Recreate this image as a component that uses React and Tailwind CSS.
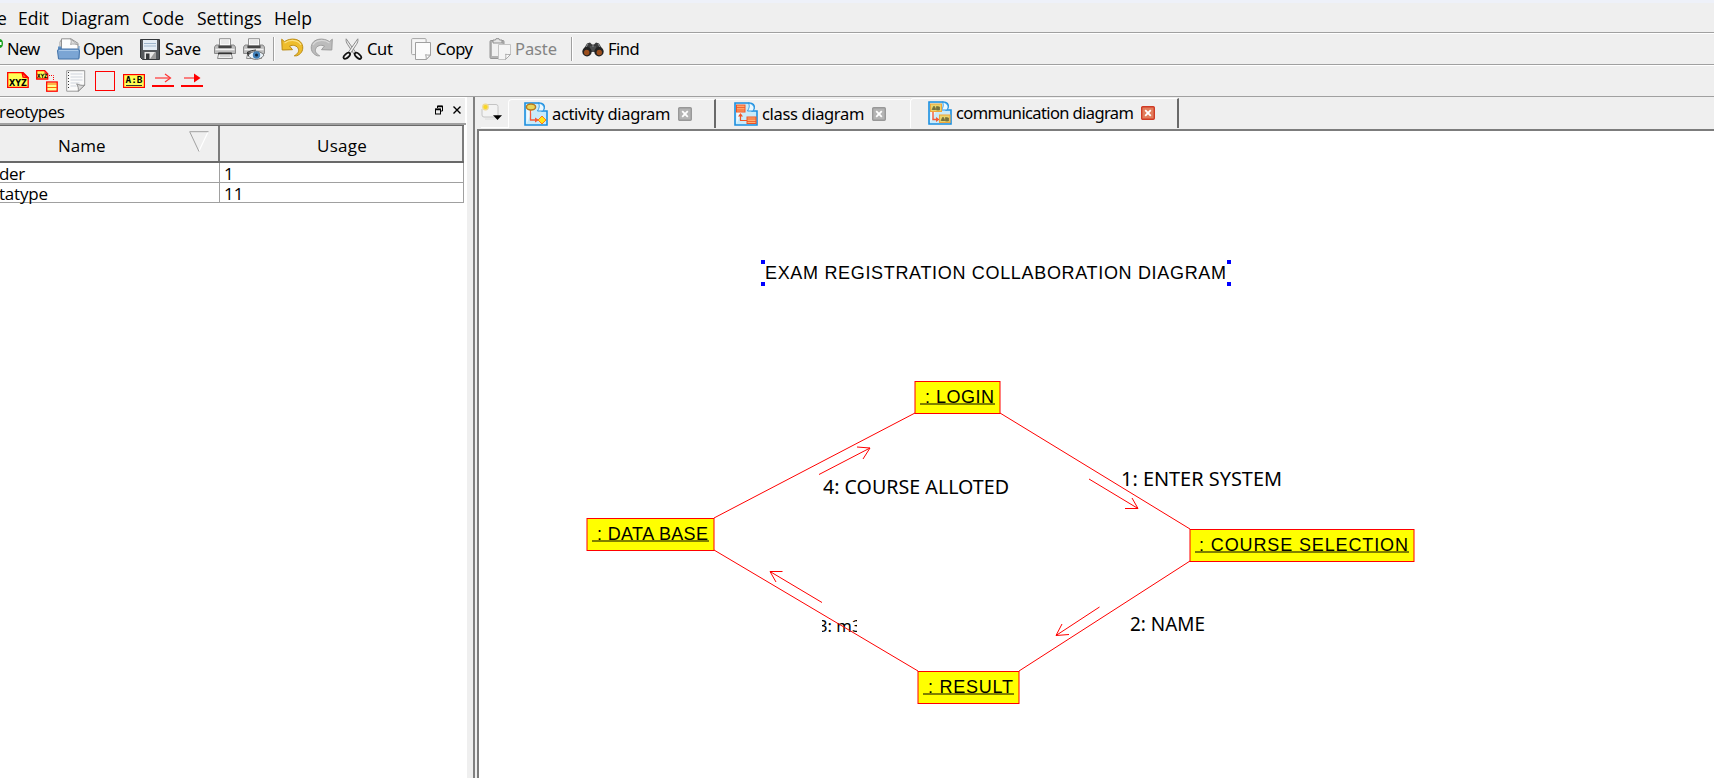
import React from "react";

const UI = "font-['Open_Sans','Noto_Sans',sans-serif]";
const TAHOMA = "font-['Noto_Sans','Open_Sans',sans-serif]";

/* ---------- toolbar icons ---------- */
function OpenIcon() {
  return (
    <svg width="23" height="22" viewBox="0 0 23 22" className="shrink-0">
      <path d="M4.500 12V1.500L3 4v6" fill="#fff" stroke="#9a9a9a" />
      <path d="M4.500 12V.8H14l7 4.500V12z" fill="#fdfdfd" stroke="#909090" />
      <path d="M13.500.8c1 2 .8 3.700 0 5.700 2.500-.8 5-.5 7.500.5z" fill="#dcdcdc" stroke="#9a9a9a" strokeWidth=".8" />
      <path d="M1 8.500h3.500v3H21.500V8h1v12H1z" fill="#5d8fc4" />
      <path d="M.5 13c0-1.500 1-2 2-2h18c1.300 0 2 .7 2 2l-.7 8H1.500z" fill="#7ba5d4" stroke="#4473a8" />
      <path d="M2 12.500h19" stroke="#a9c8e8" />
    </svg>
  );
}
function SaveIcon() {
  return (
    <svg width="20" height="21" viewBox="0 0 20 21" className="shrink-0">
      <path d="M.5.5h19v20h-17l-2-2z" fill="#54585c" stroke="#34373a" />
      <rect x="3" y="1" width="14" height="10" fill="#e4edf5" />
      <path d="M4 4.500h12M4 7h12" stroke="#9fb6cc" />
      <rect x="4.500" y="13" width="11" height="7" fill="#e8e8e8" />
      <rect x="6" y="14.500" width="3.500" height="5.500" fill="#34373a" />
      <path d="M10 20l5-7h.5v7z" fill="#9b9b9b" />
    </svg>
  );
}
function PrinterShape() {
  return (
    <>
      <path d="M5.500 8V.7h11V8z" fill="#f8f8f8" stroke="#909090" />
      <path d="M7 3h8M7 5h8" stroke="#d8d8d8" />
      <path d="M2 7h3v3h12V7h3l1.500 2v6.500H.5V9z" fill="#bcbcbc" stroke="#8a8a8a" />
      <rect x="4.500" y="7.500" width="13" height="2.500" fill="#444" />
      <path d="M1.500 11.500h19" stroke="#f2f2f2" strokeWidth="1.500" />
      <path d="M5 14.500h12l1.500 6h-15z" fill="#f0f0f0" stroke="#8c8c8c" />
      <path d="M4 15.500h14" stroke="#333" strokeWidth="1.600" />
      <path d="M6 18h10" stroke="#bbb" />
    </>
  );
}
function PrintIcon() {
  return (
    <svg width="22" height="22" viewBox="0 0 22 22" className="shrink-0">
      <PrinterShape />
    </svg>
  );
}
function PreviewIcon() {
  return (
    <svg width="22" height="22" viewBox="0 0 22 22" className="shrink-0">
      <PrinterShape />
      <path d="M5 17.500c4-5 11-6 16-.5-3 5.500-12 6-16 .5z" fill="#eaf2f8" stroke="#777" />
      <circle cx="13.500" cy="17" r="3.700" fill="#3f7fb8" />
      <circle cx="13.500" cy="17" r="1.500" fill="#12263c" />
      <path d="M4 14.500c3-1.500 5-2 9-2.500M4.500 14l1 4" stroke="#333" fill="none" />
    </svg>
  );
}
function TurnIcon({ redo }) {
  return (
    <svg width="23" height="19" viewBox="0 0 23 19" className={redo ? "shrink-0 -scale-x-100" : "shrink-0"}>
      <path
        d="M.7 1.200L3.500 3.700C9-.6 20.500 0 21.700 8.500c.5 4.500-2 8-6.200 9.300h-2.200c4-2.300 4.900-4.700 4-7C16.200 7.600 12 6.500 8.500 8l3 3.700-10.300.3z"
        fill={redo ? "#bcbcbc" : "#eebd2c"}
        stroke={redo ? "#9d9d9d" : "#bb8a10"}
      />
      <path d="M3.500 5c6-4.200 14-3 16.500 2" fill="none" stroke={redo ? "#d8d8d8" : "#fbe184"} strokeWidth="1.300" />
    </svg>
  );
}
function CutIcon() {
  return (
    <svg width="21" height="22" viewBox="0 0 21 22" className="shrink-0">
      <path d="M4.200.8c-.5 2 .3 4 1.300 5.500L12 16l1.800-1.500z" fill="#e8e8e8" stroke="#8c8c8c" />
      <path d="M15.800.8c.5 2-.3 4-1.300 5.500L8 16l-1.800-1.500z" fill="#f4f4f4" stroke="#8c8c8c" />
      <ellipse cx="4.800" cy="17.800" rx="3.900" ry="2" transform="rotate(-42 4.800 17.800)" fill="#efefef" stroke="#111" strokeWidth="1.800" />
      <ellipse cx="16" cy="17.800" rx="3.900" ry="2" transform="rotate(42 16 17.800)" fill="#efefef" stroke="#111" strokeWidth="1.800" />
    </svg>
  );
}
function CopyIcon() {
  return (
    <svg width="20" height="22" viewBox="0 0 20 22" className="shrink-0">
      <rect x=".6" y=".6" width="14.500" height="16" rx="1" fill="#f6f6f6" stroke="#a5a5a5" />
      <path d="M4.500 4.500h15V17l-4 4.500h-11z" fill="#fbfbfb" stroke="#a0a0a0" />
      <path d="M19.500 17c-2 .3-3.500.2-5-.3.8 1.600.9 3.200.5 4.800z" fill="#fff" stroke="#a0a0a0" />
    </svg>
  );
}
function PasteIcon() {
  return (
    <svg width="22" height="22" viewBox="0 0 22 22" className="shrink-0">
      <rect x="1" y="2.500" width="14" height="18" rx="1" fill="#b3b3b3" stroke="#969696" />
      <rect x="3" y="4" width="10" height="14" fill="#f1f1f1" />
      <path d="M4 5V2h2.500L7 .7h3L10.500 2H13v3z" fill="#e5e5e5" stroke="#8f8f8f" />
      <path d="M9.500 6.500h12v10l-5 5h-7z" fill="#f5f5f5" stroke="#c4c4c4" />
      <path d="M21.500 16.500c-2 .3-3.500.2-5-.3.500 1.600.5 3.400 0 5.300z" fill="#fff" stroke="#aaa" />
    </svg>
  );
}
function FindIcon() {
  return (
    <svg width="22" height="15" viewBox="0 0 22 15" className="shrink-0">
      <path d="M1 8L5 1.500l3-1 2 2h2l2-2 3 1L21 8z" fill="#38393a" />
      <path d="M8 4h6v6H8z" fill="#4b4d4e" />
      <circle cx="5" cy="9.800" r="4.700" fill="#222" />
      <circle cx="17" cy="9.800" r="4.700" fill="#222" />
      <circle cx="4.700" cy="10.500" r="2.700" fill="#9c4f1d" />
      <circle cx="17.300" cy="10.500" r="2.700" fill="#9c4f1d" />
      <path d="M4 5l2-3M16 2l2 3M10 4h2" stroke="#8a8c8e" />
    </svg>
  );
}

/* ---------- diagram element icons ---------- */
function XyzIcon() {
  return (
    <svg width="22" height="16" viewBox="0 0 22 16" className="shrink-0">
      <path d="M.7.7h15.500l5 5v9.600H.7z" fill="#ffff54" stroke="#f00" strokeWidth="1.300" />
      <path d="M15 .7l1 4.500 5 .5z" fill="#ff7a3c" stroke="#f00" strokeWidth="1.200" />
      <text x="2" y="13.500" fontSize="9" fontWeight="700" fontFamily="DejaVu Sans" textLength="18" lengthAdjust="spacingAndGlyphs">XYZ</text>
    </svg>
  );
}
function LinkedIcon() {
  return (
    <svg width="22" height="22" viewBox="0 0 22 22" className="shrink-0">
      <path d="M.7.7h8l3 3V9h-11z" fill="#ffff54" stroke="#f00" strokeWidth="1.300" />
      <path d="M8 .7l.7 3 3 .3z" fill="#f33" />
      <text x="1" y="7.800" fontSize="6" fontWeight="700" fontFamily="DejaVu Sans" textLength="10.500" lengthAdjust="spacingAndGlyphs">XYZ</text>
      <path d="M13 5.500h4.500V11" fill="none" stroke="#f00" strokeDasharray="1 1" />
      <rect x="10.700" y="12" width="10.500" height="9.200" fill="#ffff8c" stroke="#f00" strokeWidth="1.300" />
      <path d="M11 14h10M11 17.500h10" stroke="#f60" strokeWidth="1" />
    </svg>
  );
}
function NoteIcon() {
  return (
    <svg width="20" height="22" viewBox="0 0 20 22" className="shrink-0">
      <path d="M.7.7h18v14.500l-6.500 6H.7z" fill="#fafafa" stroke="#9a9a9a" />
      <path d="M4.500 4h12M4.500 7h12M4.500 10h12M4.500 13h9M4.500 16h6" stroke="#cfd4dc" />
      <path d="M2.500 2v18" stroke="#333" strokeDasharray="1 2" />
      <path d="M18.700 15.200c-2.500.4-5 0-8-1.300 1.500 2.600 2 5 1.500 7.400z" fill="#dadada" stroke="#8e8e8e" />
    </svg>
  );
}
function BoxIcon() {
  return (
    <svg width="20" height="20" viewBox="0 0 20 20" className="shrink-0">
      <rect x=".5" y=".5" width="19" height="19" fill="none" stroke="#f00" />
    </svg>
  );
}
function InstanceIcon() {
  return (
    <svg width="22" height="14" viewBox="0 0 22 14" className="shrink-0">
      <rect x=".6" y=".6" width="20.800" height="12.800" fill="#ffff54" stroke="#f00" strokeWidth="1.200" />
      <text x="2.500" y="9" fontSize="8.500" fontWeight="700" fontFamily="DejaVu Sans Mono" textLength="17" lengthAdjust="spacingAndGlyphs">A:B</text>
      <path d="M3 11.500h16" stroke="#333" />
    </svg>
  );
}
function MessageIcon({ filled }) {
  return (
    <svg width="22" height="14" viewBox="0 0 22 14" className="shrink-0">
      <path d="M3 5h15" stroke="#f33" strokeWidth="1.200" />
      {filled ? <path d="M13 .5L19.500 5 13 9.500z" fill="#f00" /> : <path d="M13 1l5.500 4L13 9" fill="none" stroke="#f33" strokeWidth="1.200" />}
      <path d="M0 13h22" stroke="#f00" strokeWidth="2" />
    </svg>
  );
}

/* ---------- tab icons ---------- */
function PageShape() {
  return (
    <>
      <path d="M1 1h14c4 0 6 2 5 5.500L18.500 9H23v14H1z" fill="#c9ebfa" stroke="#1b8fe0" strokeWidth="1.600" />
      <path d="M14 1c2 2 1.500 4.500-.5 8H19c2-3 1.500-7-5-8z" fill="#eaf8ff" stroke="#2b98e4" />
      <path d="M2.500 21.500V2.500h9z" fill="#effaff" />
    </>
  );
}
function ActivityIcon() {
  return (
    <svg width="24" height="24" viewBox="0 0 24 24" className="shrink-0">
      <PageShape />
      <path d="M6.500 8v10h7" fill="none" stroke="#f25a3a" strokeWidth="1.300" />
      <path d="M11 15.500l4 2.500-4 2.500z" fill="#f25a3a" />
      <ellipse cx="7" cy="5" rx="4.600" ry="3" fill="#e8d65a" stroke="#b57920" strokeWidth="1.500" />
      <path d="M18 14l4 4-4 4-4-4z" fill="#ffe516" stroke="#ff7a1a" />
    </svg>
  );
}
function ClassIcon() {
  return (
    <svg width="24" height="24" viewBox="0 0 24 24" className="shrink-0">
      <PageShape />
      <rect x="2.500" y="3" width="8.500" height="7" fill="#ffa56a" stroke="#ee5426" />
      <path d="M3 5.500h8M3 8h8" stroke="#ee5426" strokeWidth=".8" />
      <path d="M6.500 13v5.500H13" fill="none" stroke="#ee5426" strokeWidth="1.200" />
      <path d="M4 14.500L6.500 11 9 14.500z" fill="#ee5426" />
      <rect x="13" y="15" width="9" height="6.500" fill="#ffb070" stroke="#ee5426" />
      <path d="M13 17h9M13 19.500h9" stroke="#ee5426" strokeWidth=".8" />
    </svg>
  );
}
function CommunicationIcon() {
  return (
    <svg width="24" height="24" viewBox="0 0 24 24" className="shrink-0">
      <PageShape />
      <rect x="2.500" y="3" width="11" height="7.500" fill="#e9d46c" stroke="#f0a63a" />
      <path d="M4 9l1.500-3.500h1L8 9M8.500 9V5.500l3 .5v3z" fill="#76723e" stroke="#76723e" strokeWidth=".8" />
      <path d="M5 11v7.500h5" fill="none" stroke="#f25a3a" strokeWidth="1.400" />
      <path d="M8 16l3.500 2.500L8 21z" fill="#f25a3a" />
      <rect x="11.500" y="14" width="10.500" height="7.500" fill="#e9d46c" stroke="#f0a63a" />
      <path d="M13 20l1.500-3.500h1L17 20M17.500 20v-3.500l3 .5v3z" fill="#76723e" stroke="#76723e" strokeWidth=".8" />
    </svg>
  );
}
function TabClose({ active }) {
  return (
    <svg width="14" height="14" viewBox="0 0 14 14" className="shrink-0">
      <rect x=".7" y=".7" width="12.600" height="12.600" rx="1" fill={active ? "#e27d5c" : "#b4b4b4"} stroke={active ? "#cf3a24" : "#989898"} strokeWidth="1.400" />
      <path d="M4.200 4.200l5.600 5.600M9.800 4.200L4.200 9.800" stroke="#fff" strokeWidth="1.800" />
    </svg>
  );
}
function NewTabIcon() {
  return (
    <svg width="22" height="18" viewBox="0 0 22 18" className="shrink-0">
      <path d="M6 1.500h9q2 0 2 2V12q0 2-2 2H3q-2 0-2-2V6" fill="#f3f3f3" stroke="#c4c4c4" />
      <path d="M4 16h11" stroke="#dcdcdc" />
      <circle cx="4.500" cy="4" r="3.400" fill="#f0d890" />
      <circle cx="4.500" cy="4" r="2.100" fill="#f8d722" />
      <path d="M12 12.300h9l-4.500 4.700z" fill="#000" />
    </svg>
  );
}

function Separator({ className = "" }) {
  return <div className={`h-6 w-0.5 shrink-0 border-l border-[#a0a0a0] bg-white ${className}`} />;
}

function MenuBar() {
  return (
    <div className={`flex h-[30px] shrink-0 items-center border-b border-[#a0a0a0] pt-[2px] text-[17.5px] leading-none ${UI}`}>
      <span className="w-[18px]"><span className="-ml-[3px]">e</span></span>
      <span className="w-[43px]">Edit</span>
      <span className="w-[81px] tracking-[-0.1px]">Diagram</span>
      <span className="w-[55px]">Code</span>
      <span className="w-[77px]">Settings</span>
      <span>Help</span>
    </div>
  );
}

function MainToolbar() {
  return (
    <div className={`flex h-8 shrink-0 items-center border-t border-b border-t-white border-b-[#a0a0a0] text-[16.5px] leading-none tracking-[-0.35px] ${TAHOMA}`}>
      <svg width="7" height="22" viewBox="0 0 7 22" className="shrink-0">
        <path d="M0 1c2 .5 3 2 3 4.500S2 9.500 0 10z" fill="#19a01e" />
        <path d="M0 4h1.500v3H0z" fill="#fff" />
      </svg>
      <span className="w-[50px] shrink-0 tracking-[-0.6px]">New</span>
      <OpenIcon />
      <span className="ml-[3px] w-[57px] shrink-0 tracking-[-0.7px]">Open</span>
      <SaveIcon />
      <span className="ml-[5px] w-[49px] shrink-0 tracking-normal">Save</span>
      <PrintIcon />
      <span className="w-[7px]" />
      <PreviewIcon />
      <Separator className="ml-[8px]" />
      <span className="mb-[4px] ml-[6px] flex gap-[6px]">
        <TurnIcon />
        <TurnIcon redo />
      </span>
      <span className="w-[9px]" />
      <CutIcon />
      <span className="ml-[4px] w-[44px] shrink-0">Cut</span>
      <CopyIcon />
      <span className="ml-[5px] w-[53px] shrink-0 tracking-[-0.6px]">Copy</span>
      <PasteIcon />
      <span className="ml-[4px] w-[56px] shrink-0 text-[#848484] tracking-[-0.1px]">Paste</span>
      <Separator />
      <span className="w-[9px]" />
      <FindIcon />
      <span className="ml-[4px] tracking-[-0.5px]">Find</span>
    </div>
  );
}

function ElementToolbar() {
  return (
    <div className="flex h-8 shrink-0 items-center border-t border-b border-t-white border-b-[#a0a0a0] pl-[7px]">
      <span className="mb-[2px] flex"><XyzIcon /></span>
      <span className="ml-[7px] flex"><LinkedIcon /></span>
      <span className="ml-[8px] flex"><NoteIcon /></span>
      <span className="ml-[9px] flex"><BoxIcon /></span>
      <span className="ml-[8px] flex"><InstanceIcon /></span>
      <span className="mb-[3px] ml-[7px] flex gap-[7px]">
        <MessageIcon />
        <MessageIcon filled />
      </span>
    </div>
  );
}

function StereotypesPanel() {
  return (
    <section className={`flex w-[467px] shrink-0 flex-col border-r border-white text-[17px] leading-none ${UI}`}>
      <div className="flex h-[26px] items-center justify-between border-t border-r border-white">
        <span className="-ml-px pt-px tracking-[-0.5px]">reotypes</span>
        <span className="mb-px flex items-center gap-[9px] pr-[4px]">
          <svg width="9" height="10" viewBox="0 0 9 10">
            <path d="M2.500 3V1h5v5H6" fill="none" stroke="#000" />
            <path d="M2 1.500h6" stroke="#000" strokeWidth="1.500" />
            <rect x=".5" y="4" width="5" height="5" fill="none" stroke="#000" />
            <path d="M0 4.500h6" stroke="#000" strokeWidth="1.500" />
          </svg>
          <svg width="8" height="8" viewBox="0 0 8 8">
            <path d="M.5.5l7 7M7.500.5l-7 7" stroke="#000" strokeWidth="1.400" />
          </svg>
        </span>
      </div>
      <div className="flex grow flex-col border-t-2 border-[#a0a0a0] bg-white">
        <div className="flex h-[38px] w-[464px] border-t border-b-2 border-[#696969] bg-[#efefef]">
          <div className="flex w-[220px] items-center border-r-2 border-[#7c7c7c]">
            <span className="ml-[58px] w-[131px] pt-[4px]">Name</span>
            <svg width="20" height="21" viewBox="0 0 20 21" className="mb-[4px]">
              <path d="M19 1L10 20" stroke="#fff" strokeWidth="1.200" />
              <path d="M19.500.7H.7L10 20.500" fill="none" stroke="#a0a0a0" />
            </svg>
          </div>
          <div className="flex grow items-center justify-center border-r-2 border-[#7c7c7c] pt-[4px] pl-[2px] tracking-[0.25px]">Usage</div>
        </div>
        <div className="flex h-5 w-[464px] items-center border-r border-b border-[#a0a0a0]">
          <span className="flex h-full w-[220px] items-center border-r border-[#a0a0a0] pt-[2px] tracking-[-0.4px]">
            <span className="-ml-[1px]">der</span>
          </span>
          <span className="pt-[2px] pl-[4px]">1</span>
        </div>
        <div className="flex h-5 w-[464px] items-center border-r border-b border-[#a0a0a0]">
          <span className="flex h-full w-[220px] items-center border-r border-[#a0a0a0] pt-[2px]">
            <span className="-ml-[1px] tracking-[-0.2px]">tatype</span>
          </span>
          <span className="pt-[2px] pl-[4px]">11</span>
        </div>
      </div>
    </section>
  );
}

function TabStrip() {
  return (
    <div className={`flex h-8 items-start pl-[6px] text-[16.5px] leading-none whitespace-nowrap ${TAHOMA}`}>
      <div className="flex h-[31px] w-[27px] shrink-0 items-center border-b border-white pb-[1px]">
        <NewTabIcon />
      </div>
      <div className="mt-[2px] flex h-[29px] w-[208px] shrink-0 items-center rounded-tl border-t border-l border-white border-r-2 border-r-[#696969] pl-[15px]">
        <ActivityIcon />
        <span className="ml-[4px] w-[126px] tracking-[-0.35px]">activity diagram</span>
        <TabClose />
      </div>
      <div className="mt-[2px] flex h-[29px] w-[194px] shrink-0 items-center border-t border-white pl-[18px]">
        <ClassIcon />
        <span className="ml-[4px] w-[110px] tracking-[-0.35px]">class diagram</span>
        <TabClose />
      </div>
      <div className="mt-px flex h-[30px] w-[269px] shrink-0 items-center rounded-tl border-t border-l border-white border-r-2 border-r-[#696969] pb-px pl-[17px]">
        <CommunicationIcon />
        <span className="ml-[4px] w-[185px] tracking-[-0.62px]">communication diagram</span>
        <TabClose active />
      </div>
    </div>
  );
}

const nodes = [
  { label: ": LOGIN", x: 915, y: 381.5, w: 85, tx: 925, tw: 69 },
  { label: ": DATA BASE", x: 587, y: 518.5, w: 127, tx: 597, tw: 111 },
  { label: ": COURSE SELECTION", x: 1190, y: 529.5, w: 224, tx: 1199, tw: 209 },
  { label: ": RESULT", x: 918, y: 671.5, w: 101, tx: 928, tw: 85 },
];
const edges = [
  "M714 518L915 413",
  "M1000 413L1190 529",
  "M1190 561L1019 671",
  "M918 671L714 550",
];
const arrows = [
  "M819 474.500L870 448M857 447L870 448L863 459",
  "M1089 479L1138 508.500M1125 508.500H1138L1132 498",
  "M1099.500 607L1056 635.500M1062 624L1056 635.500L1069 634.500",
  "M822 602.500L770 571.500M782.500 571.500H770L776 582",
];
const messages = [
  { label: "4: COURSE ALLOTED", x: 823, y: 494, w: 186 },
  { label: "1: ENTER SYSTEM", x: 1121, y: 486, w: 161 },
  { label: "2: NAME", x: 1130, y: 631, w: 75 },
];
const handles = [[761, 260], [1227, 260], [761, 282], [1227, 282]];

function Diagram() {
  return (
    <svg width="1235" height="647" viewBox="479 131 1235 647" className="block">
      <text x="765" y="279" fontSize="18" fontFamily="Liberation Sans" textLength="461" lengthAdjust="spacing">
        EXAM REGISTRATION COLLABORATION DIAGRAM
      </text>
      {handles.map(([x, y]) => (
        <rect key={`${x}-${y}`} x={x} y={y} width="4" height="4" fill="#00f" />
      ))}
      {messages.map((m) => (
        <text key={m.label} x={m.x} y={m.y} fontSize="20.500" fontFamily="Noto Sans" textLength={m.w} lengthAdjust="spacingAndGlyphs">
          {m.label}
        </text>
      ))}
      <clipPath id="label-clip">
        <rect x="822" y="612" width="35" height="30" />
      </clipPath>
      <text x="818" y="632" fontSize="17" fontFamily="Noto Sans" textLength="43.500" lengthAdjust="spacingAndGlyphs" clipPath="url(#label-clip)">
        3: m3
      </text>
      <g fill="none" stroke="#f00">
        {edges.map((d) => <path key={d} d={d} />)}
        {arrows.map((d) => <path key={d} d={d} />)}
      </g>
      {nodes.map((n) => (
        <g key={n.label}>
          <rect x={n.x} y={n.y} width={n.w} height="32" fill="#ff0" stroke="#f00" />
          <rect x={n.x + 5} y={n.y + 21.5} width={n.w - 10} height="2" fill="#808000" />
          <text x={n.tx} y={n.y + 21.5} fontSize="18" fontFamily="Liberation Sans" textLength={n.tw} lengthAdjust="spacing">
            {n.label}
          </text>
        </g>
      ))}
    </svg>
  );
}

export default function App() {
  return (
    <div className="flex h-[778px] w-[1714px] flex-col overflow-hidden bg-[#efefef] text-black">
      <div className="h-[3px] shrink-0 bg-[#eef1f9]" />
      <MenuBar />
      <MainToolbar />
      <ElementToolbar />
      <div className="flex min-h-0 grow">
        <StereotypesPanel />
        <div className="w-[8px] shrink-0 border-r-2 border-[#808080]" />
        <main className="flex min-w-0 grow flex-col">
          <TabStrip />
          <div className="ml-[2px] min-h-0 grow border-t-2 border-l-2 border-[#7c7c7c] bg-white">
            <Diagram />
          </div>
        </main>
      </div>
    </div>
  );
}
